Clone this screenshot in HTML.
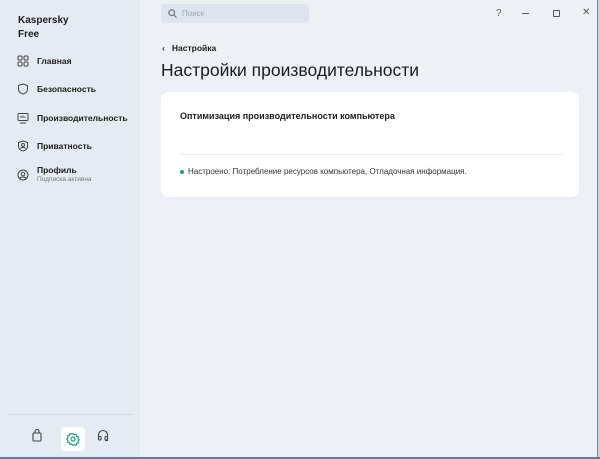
<!DOCTYPE html>
<html><head><meta charset="utf-8"><style>
*{margin:0;padding:0;box-sizing:border-box}
body{width:600px;height:459px;overflow:hidden;font-family:"Liberation Sans","Noto Sans CJK SC",sans-serif;background:#edf1f6;position:relative;color:#1d1d1b}
.side{position:absolute;left:0;top:0;width:140px;height:459px;background:#e5ebf3}
.brand{position:absolute;left:18px;top:14px;font-size:10px;font-weight:bold;line-height:14px}
.nav{position:absolute;left:17px;font-size:8.5px;font-weight:bold;display:flex;align-items:center}
.nav svg{width:12px;height:12px;margin-right:8px}
.sub{font-size:6.5px;color:#777;font-weight:normal;display:block;margin-top:1px}
.div{position:absolute;left:8px;width:126px;top:414px;height:1px;background:#d4dbe4}
.search{position:absolute;left:161px;top:4px;width:148px;height:19px;background:#dde4ed;border-radius:4px;font-size:8px;color:#9aa;padding:5px 0 0 21px}
.win{position:absolute;top:8px;font-size:10px;color:#555}
.card{position:absolute;left:161px;top:92px;width:418px;height:105px;background:#fff;border-radius:8px}
.border-r{position:absolute;right:0;top:0;width:3px;height:459px;background:#c9d4e2;border-left:1px solid #6e89ad}
.border-b{position:absolute;left:0;bottom:0;width:600px;height:2px;background:#5d7ba3}
</style></head><body>
<div class="side">
<div class="brand">Kaspersky<br>Free</div>
<div class="nav" style="top:55px"><svg viewBox="0 0 12 12" fill="none" stroke="#444" stroke-width="1"><rect x="1" y="1" width="4" height="4" rx="1"/><rect x="7" y="1" width="4" height="4" rx="1"/><rect x="1" y="7" width="4" height="4" rx="1"/><rect x="7" y="7" width="4" height="4" rx="1"/></svg>Главная</div>
<div class="nav" style="top:83px"><svg viewBox="0 0 12 12" fill="none" stroke="#444" stroke-width="1"><path d="M6 1L10.5 2.5V6C10.5 9 8 10.5 6 11C4 10.5 1.5 9 1.5 6V2.5Z"/></svg>Безопасность</div>
<div class="nav" style="top:112px"><svg viewBox="0 0 12 12" fill="none" stroke="#444" stroke-width="1"><rect x="1" y="1.5" width="10" height="7" rx="1"/><path d="M3 11h6M4 6V4M6 6V3.5M8 6V4.5"/></svg>Производительность</div>
<div class="nav" style="top:140px"><svg viewBox="0 0 12 12" fill="none" stroke="#444" stroke-width="1"><path d="M6 1L10.5 2.5V6C10.5 9 8 10.5 6 11C4 10.5 1.5 9 1.5 6V2.5Z"/><circle cx="6" cy="5" r="1.5"/><path d="M3.5 8.5C4.5 7 7.5 7 8.5 8.5"/></svg>Приватность</div>
<div class="nav" style="top:165px;align-items:flex-start"><svg viewBox="0 0 12 12" fill="none" stroke="#444" stroke-width="1" style="margin-top:4px"><circle cx="6" cy="6" r="5"/><circle cx="6" cy="5" r="1.8"/><path d="M3 9.5C4 7.5 8 7.5 9 9.5"/></svg><span>Профиль<span class="sub">Подписка активна</span></span></div>
<div class="div"></div>
<svg style="position:absolute;left:31px;top:429px" width="12" height="13" viewBox="0 0 12 13" fill="none" stroke="#444" stroke-width="1.1"><rect x="2" y="4" width="8" height="8" rx="1"/><path d="M4 4V2.5a2 2 0 0 1 4 0V4"/></svg>
<div style="position:absolute;left:61px;top:427px;width:24px;height:24px;background:#fff;border-radius:4px"></div>
<svg style="position:absolute;left:66px;top:432px" width="14" height="14" viewBox="0 0 14 14" fill="none" stroke="#1f9e85" stroke-width="1.2"><path d="M7 1.5l1.3 1.3 1.8-.4.5 1.8 1.8.5-.4 1.8L13.3 7.8l-1.3 1.3.4 1.8-1.8.5-.5 1.8-1.8-.4L7 13.3 5.7 12l-1.8.4-.5-1.8-1.8-.5.4-1.8L.7 7l1.3-1.3-.4-1.8 1.8-.5.5-1.8 1.8.4Z"/><circle cx="7" cy="7" r="2"/></svg>
<svg style="position:absolute;left:97px;top:429px" width="12" height="13" viewBox="0 0 12 13" fill="none" stroke="#444" stroke-width="1.1"><path d="M1.5 9V6a4.5 4.5 0 0 1 9 0v5.5H8"/><rect x="1.5" y="7.5" width="2.5" height="3.5" rx="1"/><rect x="8" y="7.5" width="2.5" height="3.5" rx="1"/></svg>
</div>
<div class="search">Поиск</div>
<svg style="position:absolute;left:168px;top:9px" width="9" height="9" viewBox="0 0 9 9" fill="none" stroke="#777" stroke-width="1.2"><circle cx="3.7" cy="3.7" r="2.8"/><path d="M5.8 5.8L8.5 8.5"/></svg>
<div class="win" style="left:496px">?</div>
<div style="position:absolute;left:522px;top:13px;width:7px;height:1px;background:#555"></div>
<div style="position:absolute;left:553px;top:10px;width:7px;height:7px;border:1px solid #555;border-radius:1px"></div>
<div class="win" style="left:582px;top:7px">✕</div>
<div style="position:absolute;left:162px;top:43px;font-size:8.5px;font-weight:bold">‹&nbsp;&nbsp;&nbsp;Настройка</div>
<div style="position:absolute;left:161px;top:60px;font-size:17.5px">Настройки производительности</div>
<div class="card">
<div style="position:absolute;left:19px;top:19px;font-size:9px;font-weight:bold">Оптимизация производительности компьютера</div>
<div style="position:absolute;left:19px;right:16px;top:62px;height:1px;background:#e8ecf0"></div>
<div style="position:absolute;left:19px;top:78px;width:4px;height:4px;border-radius:50%;background:#1f9e85"></div>
<div style="position:absolute;left:27px;top:75px;font-size:8px;color:#333">Настроено: Потребление ресурсов компьютера, Отладочная информация.</div>
</div>
<div class="border-r"></div>
<div class="border-b"></div>
</body></html>
